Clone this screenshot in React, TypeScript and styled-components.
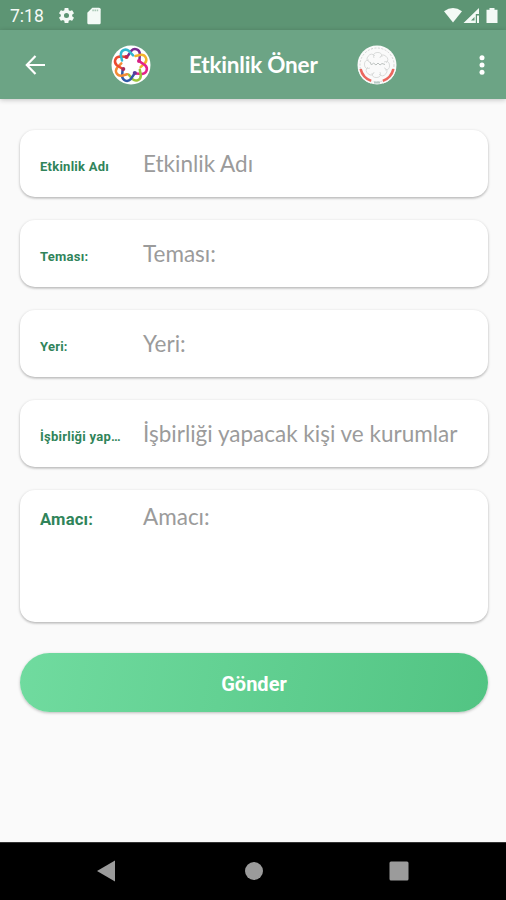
import React from "react";
import styled, { createGlobalStyle } from "styled-components";

const GlobalStyle = createGlobalStyle`
  *, *::before, *::after { box-sizing: border-box; }
  html, body { margin: 0; padding: 0; background: #fafafa; }
`;

const Screen = styled.div`
  width: 506px;
  height: 900px;
  display: flex;
  flex-direction: column;
  overflow: hidden;
  background: #fafafa;
  font-family: Roboto, sans-serif;
`;

const StatusBar = styled.header`
  flex: none;
  height: 30px;
  padding: 1px 7px 0 10px;
  display: flex;
  align-items: center;
  background: #5d9574;
  color: #f4faf6;
`;

const Clock = styled.span`
  width: 47px;
  font-size: 17.5px;
  line-height: 30px;
`;

const Indicators = styled.div<{ $end?: boolean }>`
  display: flex;
  align-items: center;
  gap: ${(p) => (p.$end ? 0 : 8)}px;
  margin-left: ${(p) => (p.$end ? "auto" : "0")};
  svg { display: block; }
`;

const AppBar = styled.div`
  flex: none;
  height: 69px;
  display: grid;
  grid-template-columns: 70px 119px 130px 117px 1fr;
  align-items: center;
  background: #6ca485;
  box-shadow: 0 1px 5px rgba(0, 0, 0, 0.22);
  svg { display: block; }
`;

const BarSlot = styled.div<{ $pad: number }>`
  padding-left: ${(p) => p.$pad}px;
`;

const Title = styled.h1`
  margin: 0;
  font: 700 22.5px/28px Lato, sans-serif;
  letter-spacing: -0.2px;
  white-space: nowrap;
  color: #fff;
`;

const Form = styled.main`
  flex: 1;
  padding: 31px 18px 0 20px;
  display: flex;
  flex-direction: column;
  gap: 23px;
`;

const Card = styled.div<{ $tall?: boolean }>`
  flex: none;
  height: ${(p) => (p.$tall ? 132 : 67)}px;
  padding: ${(p) => (p.$tall ? "12px" : "19px")} 20px 0;
  display: flex;
  align-items: flex-start;
  border-radius: 15px;
  background: #fff;
  box-shadow: 0 1px 3px rgba(0, 0, 0, 0.26), 0 2px 2px rgba(0, 0, 0, 0.06);
`;

const Label = styled.span<{ $large?: boolean }>`
  flex: none;
  width: 103px;
  margin-top: 6px;
  white-space: nowrap;
  font-weight: 700;
  font-size: ${(p) => (p.$large ? 16.6 : 13)}px;
  letter-spacing: ${(p) => (p.$large ? 0.2 : 0.25)}px;
  line-height: 24px;
  color: #30845a;
`;

const Hint = styled.span`
  white-space: nowrap;
  font: 400 22.5px/30px Lato, sans-serif;
  color: #9b9b9b;
`;

const Submit = styled.button`
  flex: none;
  height: 59px;
  margin-top: 8px;
  padding: 2px 0 0;
  border: 0;
  border-radius: 30px;
  background: linear-gradient(100deg, #70db9f, #52c483);
  box-shadow: 0 1px 3px rgba(0, 0, 0, 0.25);
  color: #fff;
  font: 700 20px/24px Roboto, sans-serif;
`;

const NavBar = styled.nav`
  flex: none;
  height: 58px;
  display: grid;
  grid-template-columns: 97px 148px 144px 1fr;
  align-items: center;
  padding-bottom: 1px;
  background: #000;
  border-top: 1px solid #333;
  svg { display: block; grid-row: 1; }
  svg:nth-child(1) { grid-column: 2; }
  svg:nth-child(2) { grid-column: 3; }
  svg:nth-child(3) { grid-column: 4; }
`;

const Gear = () => (
  <svg width="19" height="19" viewBox="0 0 24 24" fill="currentColor">
    <path d="M19.14 12.94c.04-.3.06-.61.06-.94 0-.32-.02-.64-.07-.94l2.03-1.58a.49.49 0 0 0 .12-.61l-1.92-3.32a.488.488 0 0 0-.59-.22l-2.39.96c-.5-.38-1.03-.7-1.62-.94l-.36-2.54a.484.484 0 0 0-.48-.41h-3.84c-.24 0-.43.17-.47.41l-.36 2.54c-.59.24-1.13.57-1.62.94l-2.39-.96c-.22-.08-.47 0-.59.22L2.74 8.87c-.12.21-.08.47.12.61l2.03 1.58c-.05.3-.09.63-.09.94s.02.64.07.94l-2.03 1.58a.49.49 0 0 0-.12.61l1.92 3.32c.12.22.37.29.59.22l2.39-.96c.5.38 1.03.7 1.62.94l.36 2.54c.05.24.24.41.48.41h3.84c.24 0 .44-.17.47-.41l.36-2.54c.59-.24 1.13-.56 1.62-.94l2.39.96c.22.08.47 0 .59-.22l1.92-3.32c.12-.22.07-.47-.12-.61l-2.01-1.58zM12 15.2A3.2 3.2 0 1 1 12 8.8a3.2 3.2 0 0 1 0 6.4z" />
  </svg>
);

const SdCard = () => (
  <svg width="20" height="20" viewBox="0 0 24 24" fill="currentColor">
    <path d="M18 2h-8L4 8v12c0 1.1.9 2 2 2h12c1.1 0 2-.9 2-2V4c0-1.1-.9-2-2-2z" />
    <path d="M10 5.2h7" stroke="#a9c8b5" strokeWidth="2" strokeDasharray="1.8 .8" />
  </svg>
);

const Connectivity = () => (
  <svg width="56" height="18" viewBox="0 0 56 18" fill="currentColor">
    <path d="M1 4.2Q10 -2.2 19 4.2L10 15.5Z" />
    <path d="M20.5 16 36 1v6h-3.2v9Z" />
    <path d="M28 13.5 31.5 10v3.5Z" fill="#5d9574" />
    <path d="M34 8.5h2V16h-2z" />
    <path d="M46.5 1h5v1.7h3V16h-11V2.7h3Z" />
  </svg>
);

const petals = [
  { angle: -70, color: "#7b2b91" },
  { angle: -27, color: "#f4b32c" },
  { angle: 20, color: "#e4238a" },
  { angle: 65, color: "#9bc53b" },
  { angle: 110, color: "#3159a7" },
  { angle: 150, color: "#f28b35" },
  { angle: 198, color: "#ec4a2f" },
  { angle: 243, color: "#32b8d1" },
];

const ColorLogo = () => (
  <svg width="40" height="40" viewBox="-20 -20 40 40" fill="none">
    <circle r="19.5" fill="#fff" />
    {petals.map((p) => (
      <path
        key={p.angle}
        transform={`rotate(${p.angle})`}
        d="M7.6 6.2 13.4 4.6Q16.6 3.2 16.6 0T13.4-4.6L8-6"
        stroke={p.color}
        strokeWidth="2.5"
        strokeLinecap="round"
        strokeLinejoin="round"
      />
    ))}
    <circle cx="-4.5" cy="-8" r="2.1" fill="#c8244a" />
    <circle cx="8" cy="-3.9" r="2" fill="#d52083" />
    <circle cx="3.8" cy="8" r="2.1" fill="#5e3b99" />
    <circle cx="-7.7" cy="4" r="2" fill="#a92c5b" />
  </svg>
);

const SealLogo = () => (
  <svg width="40" height="40" viewBox="-20 -20 40 40" fill="none">
    <circle r="19.5" fill="#fafafa" />
    <circle r="17" stroke="#d3d5d4" strokeWidth="1" strokeDasharray="2 1.5" />
    <g stroke="#d3d5d4" strokeWidth=".8">
      {[0, 45, 90, 135, 180, 225, 270, 315].map((a) => (
        <path key={a} transform={`rotate(${a})`} d="M8 5Q13 5 12.5 0T7-3" />
      ))}
    </g>
    <path d="M-7-3-5.5 0-3.5-2-1 0 1-2 3 0 5-1.5 8-.5" stroke="#bcc1bf" strokeWidth="1" />
    <path d="M-17 4.4A17.4 17.4 0 0 0-5.5 16.6M17 4.4A17.4 17.4 0 0 1 5.5 16.6" stroke="#f9fafa" strokeWidth="4" />
    <path d="M-16.4 4A16.8 16.8 0 0 0-5.8 15.9M16.4 4A16.8 16.8 0 0 1 5.8 15.9" stroke="#eb665d" strokeWidth="2.6" />
    <path d="M-3 17.5H3" stroke="#b9cbc6" strokeWidth="2" />
  </svg>
);

const fields = [
  { label: "Etkinlik Adı", hint: "Etkinlik Adı" },
  { label: "Teması:", hint: "Teması:" },
  { label: "Yeri:", hint: "Yeri:" },
  { label: "İşbirliği yap…", hint: "İşbirliği yapacak kişi ve kurumlar" },
  { label: "Amacı:", hint: "Amacı:", tall: true },
];

export default function App() {
  return (
    <Screen>
      <GlobalStyle />
      <StatusBar>
        <Clock>7:18</Clock>
        <Indicators>
          <Gear />
          <SdCard />
        </Indicators>
        <Indicators $end>
          <Connectivity />
        </Indicators>
      </StatusBar>
      <AppBar>
        <BarSlot $pad={25}>
          <svg width="21" height="20" viewBox="0 0 21 20" fill="none" stroke="#fff" strokeWidth="2.2">
            <path d="M20 10H2M10.5 1 1.8 10l8.7 9" />
          </svg>
        </BarSlot>
        <BarSlot $pad={41}>
          <ColorLogo />
        </BarSlot>
        <Title>Etkinlik Öner</Title>
        <BarSlot $pad={38}>
          <SealLogo />
        </BarSlot>
        <BarSlot $pad={43}>
          <svg width="6" height="20" viewBox="0 0 6 20" fill="#fff">
            <circle cx="3" cy="2.8" r="2.5" />
            <circle cx="3" cy="10" r="2.5" />
            <circle cx="3" cy="17.2" r="2.5" />
          </svg>
        </BarSlot>
      </AppBar>
      <Form>
        {fields.map((f) => (
          <Card key={f.label} $tall={f.tall}>
            <Label $large={f.tall}>{f.label}</Label>
            <Hint>{f.hint}</Hint>
          </Card>
        ))}
        <Submit>Gönder</Submit>
      </Form>
      <NavBar>
        <svg width="18" height="22" viewBox="0 0 18 22" fill="#9b9b9b">
          <path d="M0 11 18 .5v21Z" />
        </svg>
        <svg width="18" height="18" viewBox="0 0 18 18" fill="#9b9b9b">
          <circle cx="9" cy="9" r="9" />
        </svg>
        <svg width="20" height="20" viewBox="0 0 20 20" fill="#9b9b9b">
          <rect x=".5" y=".5" width="19" height="19" rx="1.5" />
        </svg>
      </NavBar>
    </Screen>
  );
}
